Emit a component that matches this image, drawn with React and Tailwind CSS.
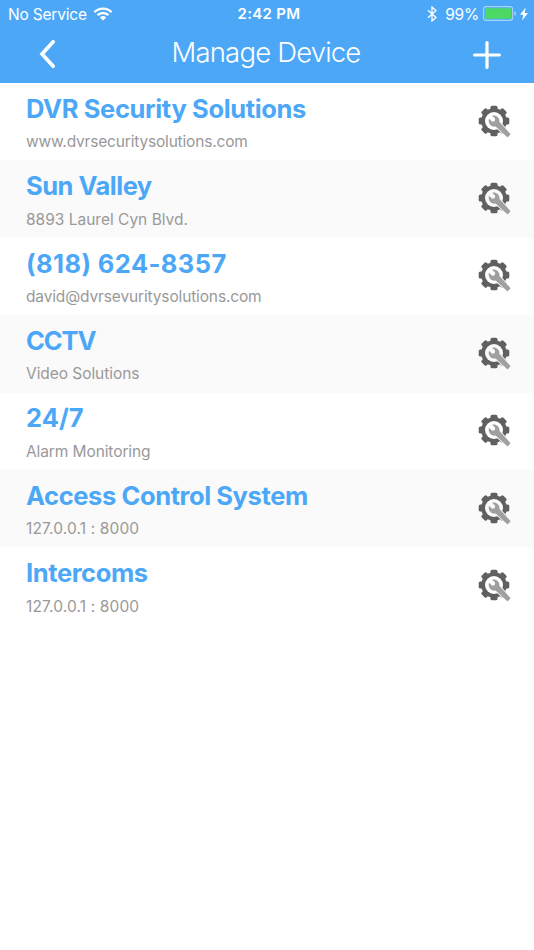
import React from 'react';

const devices = [
  { name: 'DVR Security Solutions', detail: 'www.dvrsecuritysolutions.com', nameClass: 'tracking-[-0.36px]', detailClass: 'tracking-[-0.18px]' },
  { name: 'Sun Valley', detail: '8893 Laurel Cyn Blvd.', nameClass: 'tracking-[-0.5px]', detailClass: '' },
  { name: '(818) 624-8357', detail: 'david@dvrsevuritysolutions.com', nameClass: 'tracking-[0.4px]', detailClass: 'tracking-[-0.14px]' },
  { name: 'CCTV', detail: 'Video Solutions', nameClass: 'tracking-[-1.1px]', detailClass: 'tracking-[-0.06px]' },
  { name: '24/7', detail: 'Alarm Monitoring', nameClass: 'tracking-[0px]', detailClass: 'tracking-[-0.1px]' },
  { name: 'Access Control System', detail: '127.0.0.1 : 8000', nameClass: 'tracking-[-0.4px]', detailClass: 'tracking-[0.14px]' },
  { name: 'Intercoms', detail: '127.0.0.1 : 8000', nameClass: 'tracking-[-0.4px]', detailClass: 'tracking-[0.14px]' },
];

const toothAngles = [0, 45, 90, 135, 180, 225, 270, 315];

const WifiIcon = () => (
  <svg width="20" height="14" viewBox="0 0 20 14" fill="none" stroke="white" strokeWidth="2.3">
    <path d="M1.4 5.1a12.4 12.4 0 0 1 17.2 0" />
    <path d="M4.5 8.2a8 8 0 0 1 11 0" />
    <path d="M10 13.4 6.9 10.4a4.5 4.5 0 0 1 6.2 0Z" fill="white" stroke="none" />
  </svg>
);

const BluetoothIcon = () => (
  <svg width="10" height="16" viewBox="0 0 10 16" fill="none" stroke="white" strokeWidth="1.3">
    <path d="M1 4.3 9 11.4 5 15V1l4 3.6L1 11.7" />
  </svg>
);

const BatteryIcon = () => (
  <svg width="34" height="15" viewBox="0 0 34 15" fill="none">
    <rect x="0.6" y="0.6" width="29" height="13.8" rx="2.6" stroke="white" strokeOpacity="0.5" strokeWidth="1.1" />
    <rect x="2.2" y="2.2" width="25.8" height="10.6" rx="1.2" fill="#4cd964" />
    <path d="M31.3 5c2.2.7 2.2 4.3 0 5Z" fill="white" fillOpacity="0.5" />
  </svg>
);

const BoltIcon = () => (
  <svg width="8" height="14" viewBox="0 0 8 14" fill="white">
    <path d="M5.7.4 0 7.8h3.3L2.2 13.6 8 5.9H4.7Z" />
  </svg>
);

// Gear ring with a wrench lying over its lower right side
const SettingsIcon = ({ rowColor }) => (
  <svg width="34" height="34" viewBox="0 0 34 34">
    <g fill="#606060">
      {toothAngles.map((angle) => (
        <rect key={angle} x="12.5" y="0.7" width="7" height="6" rx="1.6" transform={`rotate(${angle} 16 16)`} />
      ))}
      <circle cx="16" cy="16" r="12.8" />
    </g>
    <circle cx="16" cy="16" r="9" fill={rowColor} />
    <path
      d="M11 13.7 14.2 16.8 16.6 16.2 17.2 13.8 14.1 10.7C18.3 9.6 22 12.8 21.5 17L32.6 29.2 29.6 32.4 17.6 21.6C13.2 22.4 9.6 18.3 11 13.7Z"
      fill="#a0a0a0"
      stroke={rowColor}
      strokeWidth="1.6"
      strokeLinejoin="round"
      paintOrder="stroke"
    />
  </svg>
);

const StatusBar = () => (
  <div className="grid h-[27px] grid-cols-3 items-center pl-2 pr-[6px] text-[15.5px] leading-none">
    <div className="flex items-center gap-[6px]">
      <span className="pt-[1.5px] tracking-[-0.2px]">No Service</span>
      <WifiIcon />
    </div>
    <span className="pl-[2px] text-center text-[15px] font-semibold tracking-[0.3px]">2:42 PM</span>
    <div className="flex items-center justify-end">
      <BluetoothIcon />
      <span className="ml-2 mr-1 pt-[1.5px] tracking-[-0.2px]">99%</span>
      <BatteryIcon />
      <span className="ml-[3px]"><BoltIcon /></span>
    </div>
  </div>
);

const Header = () => (
  <header className="h-[83px] bg-[#4ca8f7] text-white">
    <StatusBar />
    <div className="flex h-[54px] items-center justify-between pl-[39px] pr-[33px]">
      <button aria-label="Back">
        <svg width="17" height="30" viewBox="0 0 17 30" fill="none" stroke="white" strokeWidth="3.7" strokeLinecap="round">
          <path d="M14.2 2.8 3 15 14.2 27.2" />
        </svg>
      </button>
      <h1 className="pb-[2px] pl-[3px] text-[27.5px] font-[340] leading-none tracking-[-0.82px]">Manage Device</h1>
      <button aria-label="Add device" className="pt-px">
        <svg width="28" height="28" viewBox="0 0 28 28" stroke="white" strokeWidth="3.2" strokeLinecap="round">
          <path d="M14 1.6v24.8M1.6 14h24.8" />
        </svg>
      </button>
    </div>
  </header>
);

const DeviceRow = ({ device, shaded }) => (
  <li className={`flex h-[77.4px] items-center justify-between pl-[26px] pr-[22px] ${shaded ? 'bg-[#fafafa]' : 'bg-white'}`}>
    <div className="whitespace-nowrap pt-[1.6px]">
      <h2 className={`text-[25.5px] font-bold leading-[32px] text-[#4ca8f7] ${device.nameClass}`}>{device.name}</h2>
      <p className={`mt-[7.5px] text-[15.5px] leading-[20px] text-[#999999] ${device.detailClass}`}>{device.detail}</p>
    </div>
    <button aria-label={`${device.name} settings`}>
      <SettingsIcon rowColor={shaded ? '#fafafa' : '#ffffff'} />
    </button>
  </li>
);

const App = () => {
  return (
    <div className="min-h-[950px] w-full bg-white font-['Inter',sans-serif]">
      <Header />
      <ul>
        {devices.map((device, index) => (
          <DeviceRow key={device.name} device={device} shaded={index % 2 === 1} />
        ))}
      </ul>
    </div>
  );
};

export default App;
